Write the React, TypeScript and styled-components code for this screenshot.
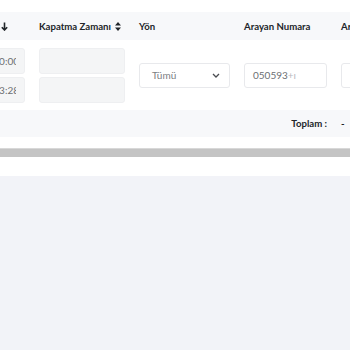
import { FC } from 'react'
import styled, { createGlobalStyle } from 'styled-components'

const GlobalStyle = createGlobalStyle`
  body {
    margin: 0;
    background-color: #f2f3f8;
    font-family: Lato, "Open Sans", sans-serif;
    color: #212529;
  }
`

const Card = styled.div`
  background-color: #fff;
  padding-top: 12px;
  overflow: hidden;
`

const Table = styled.div`
  margin-left: -75px;
  width: 500px;
`

const Row = styled.div<{ $tone?: 'head' | 'body' | 'foot' }>`
  display: grid;
  grid-template-columns: 100px 86px 91px 83px 100px;
  column-gap: 14px;
  align-items: center;
  background-color: ${p => (p.$tone === 'body' ? '#fff' : '#f7f8fa')};
  height: ${p => (p.$tone === 'body' ? '70px' : p.$tone === 'foot' ? '27px' : '28px')};
`

const HeadCell = styled.div<{ $end?: boolean }>`
  display: flex;
  align-items: center;
  gap: 4px;
  font-size: 9.6px;
  font-weight: 700;
  white-space: nowrap;
  justify-content: ${p => (p.$end ? 'flex-end' : 'flex-start')};
  padding-right: ${p => (p.$end ? '17px' : '0')};
  svg {
    flex: none;
  }
`

const Stack = styled.div`
  display: flex;
  flex-direction: column;
  gap: 3px;
`

const Field = styled.div<{ $muted?: boolean }>`
  box-sizing: border-box;
  height: ${p => (p.$muted ? '26px' : '25px')};
  border: 1px solid ${p => (p.$muted ? '#eeeff1' : '#e8e9ec')};
  border-radius: 3px;
  background-color: ${p => (p.$muted ? '#f4f5f6' : '#fff')};
  padding: 0 8px;
  display: flex;
  align-items: center;
  font-size: 10px;
  color: #6c6f73;
`

const Clip = styled.div`
  flex: 1;
  overflow: hidden;
`

const ClipText = styled.div`
  white-space: nowrap;
  text-align: right;
  margin-right: -3px;
`

const SelectBox = styled(Field)`
  justify-content: space-between;
  padding: 0 9px 0 12px;
  color: #7b7e82;
`

const Hint = styled.span`
  color: #b9bbbf;
`

const Total = styled.div<{ $right?: boolean }>`
  font-size: 9.6px;
  font-weight: 700;
  text-align: ${p => (p.$right ? 'right' : 'left')};
  white-space: nowrap;
`

const Scroller = styled.div`
  padding: 11px 0 19px;
  background-color: #fff;
`

const ScrollThumb = styled.div`
  height: 9px;
  background-color: #c4c4c4;
  border-top: 1px solid #d8d8d8;
  box-sizing: border-box;
`

const SortIcon: FC = () => (
  <svg width="6" height="9" viewBox="0 0 6 9">
    <path d="M3 0 L6 3.6 L0 3.6 Z M0 5.4 L6 5.4 L3 9 Z" fill="#212529" />
  </svg>
)

const DownArrow: FC = () => (
  <svg width="7" height="9" viewBox="0 0 7 9">
    <path d="M3.5 0.5 V8 M0.8 5.2 L3.5 8 L6.2 5.2" stroke="#212529" strokeWidth="1.6" fill="none" />
  </svg>
)

const Chevron: FC = () => (
  <svg width="8" height="5" viewBox="0 0 8 5">
    <path d="M1 1 L4 4 L7 1" stroke="#4a4d51" strokeWidth="1.3" fill="none" />
  </svg>
)

export default function App() {
  return (
    <>
      <GlobalStyle />
      <Card>
        <Table>
          <Row $tone="head">
            <HeadCell $end>
              Başlangıç Zamanı <DownArrow />
            </HeadCell>
            <HeadCell>
              Kapatma Zamanı <SortIcon />
            </HeadCell>
            <HeadCell>Yön</HeadCell>
            <HeadCell>Arayan Numara</HeadCell>
            <HeadCell>Aranan Numara</HeadCell>
          </Row>
          <Row $tone="body">
            <Stack>
              <Field $muted>
                <Clip><ClipText>01.05.2024 00:00</ClipText></Clip>
              </Field>
              <Field $muted>
                <Clip><ClipText>31.05.2024 23:28</ClipText></Clip>
              </Field>
            </Stack>
            <Stack>
              <Field $muted />
              <Field $muted />
            </Stack>
            <SelectBox>
              <span>Tümü</span>
              <Chevron />
            </SelectBox>
            <Field>
              050593<Hint>+ı</Hint>
            </Field>
            <Field />
          </Row>
          <Row $tone="foot">
            <div />
            <div />
            <div />
            <Total $right>Toplam :</Total>
            <Total>-</Total>
          </Row>
        </Table>
        <Scroller>
          <ScrollThumb />
        </Scroller>
      </Card>
    </>
  )
}
